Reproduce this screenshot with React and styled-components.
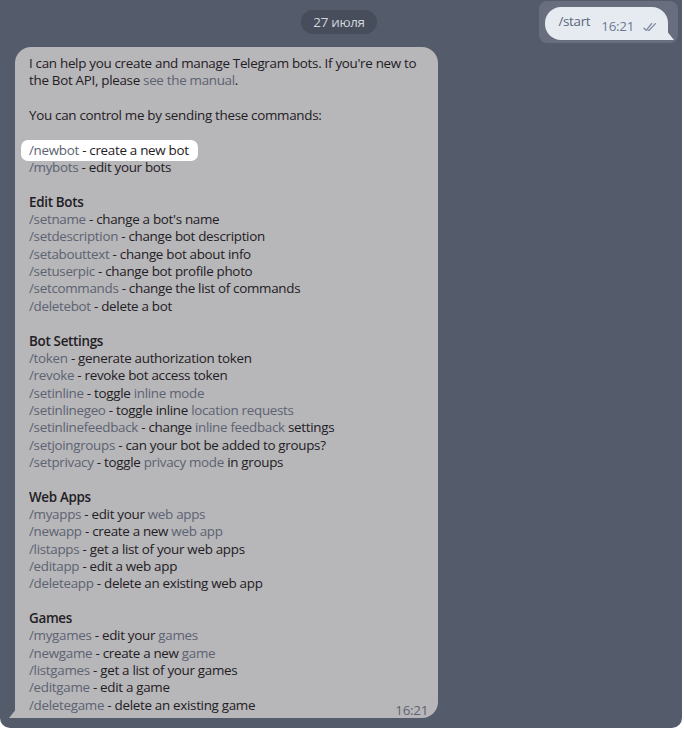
import React from "react";
import styled, { createGlobalStyle } from "styled-components";

const GlobalStyle = createGlobalStyle`
  html, body {
    margin: 0;
    padding: 0;
    background: #ffffff;
  }
  body {
    font-family: "Open Sans", "Noto Sans", sans-serif;
    letter-spacing: -0.3px;
  }
`;

const Chat = styled.div`
  width: 682px;
  height: 728px;
  background: #545b6b;
  border-radius: 0 0 10px 10px;
  box-sizing: border-box;
  padding: 1px 4px 0 0;
  overflow: hidden;
`;

const TopRow = styled.div`
  display: grid;
  grid-template-columns: 1fr auto 1fr;
  align-items: start;
  height: 46px;
`;

const DatePill = styled.div`
  grid-column: 2;
  margin-top: 9px;
  height: 24px;
  padding: 0 12px;
  border-radius: 12px;
  background: #474d5b;
  color: #d3d6dd;
  font-size: 13.4px;
  line-height: 24px;
`;

const Selection = styled.div`
  grid-column: 3;
  justify-self: end;
  background: #686e7d;
  border-radius: 8px;
  padding: 6px 10px 3px 6px;
`;

const OutBubble = styled.div`
  position: relative;
  display: flex;
  align-items: flex-end;
  gap: 11px;
  height: 33px;
  box-sizing: border-box;
  padding: 0 11px 6px 13px;
  background: #e6ebf2;
  border-radius: 16px 16px 0 16px;
  &::after {
    content: "";
    position: absolute;
    right: -6px;
    bottom: 0;
    width: 8px;
    height: 10px;
    background: #e6ebf2;
    clip-path: polygon(0 0, 0 100%, 100% 100%);
  }
`;

const OutText = styled.span`
  color: #5b6679;
  font-size: 13.4px;
  line-height: 19px;
  margin-bottom: 3px;
`;

const Time = styled.span`
  color: ${(p) => p.$color || "#6c7a90"};
  font-size: 13.4px;
  line-height: 15px;
  display: inline-flex;
  align-items: center;
  gap: 9px;
  margin-bottom: ${(p) => p.$drop || 0}px;
`;

const InBubble = styled.div`
  position: relative;
  width: 423px;
  margin-left: 15px;
  box-sizing: border-box;
  padding: 8px 10px 4px 14px;
  background: #b7b6b9;
  border-radius: 16px 16px 16px 0;
  color: #1f2024;
  font-size: 13.4px;
  line-height: 17.35px;
  &::before {
    content: "";
    position: absolute;
    left: -6px;
    bottom: 0;
    width: 8px;
    height: 10px;
    background: #b7b6b9;
    clip-path: polygon(100% 0, 100% 100%, 0 100%);
  }
`;

const Line = styled.div`
  white-space: nowrap;
  height: 17.35px;
`;

const Heading = styled(Line)`
  font-weight: 600;
`;

const Link = styled.span`
  color: #5c6372;
`;

const Marked = styled.span`
  display: inline-block;
  background: #ffffff;
  border-radius: 7px;
  margin: -2px -9px -2px -8px;
  padding: 2px 9px 2px 8px;
  line-height: 17.35px;
  vertical-align: top;
`;

const LastRow = styled.div`
  display: flex;
  justify-content: space-between;
  align-items: flex-end;
`;

const Checks = () => (
  <svg width="14" height="10" viewBox="0 0 14 10" fill="none" stroke="#7a879c" strokeWidth="1.3" strokeLinecap="round" strokeLinejoin="round">
    <path d="M1 6.2 L3.2 8.4 L8.6 1.6" />
    <path d="M5.2 8.4 L6 8.4 L12.4 1.6" />
  </svg>
);

const Cmd = ({ c, children }) => (
  <Line>
    <Link>{c}</Link> - {children}
  </Line>
);

export default function App() {
  return (
    <>
      <GlobalStyle />
      <Chat>
        <TopRow>
          <DatePill>27 июля</DatePill>
          <Selection>
            <OutBubble>
              <OutText>/start</OutText>
              <Time>
                16:21
                <Checks />
              </Time>
            </OutBubble>
          </Selection>
        </TopRow>
        <InBubble>
          <Line>I can help you create and manage Telegram bots. If you're new to</Line>
          <Line>
            the Bot API, please <Link>see the manual</Link>.
          </Line>
          <Line />
          <Line>You can control me by sending these commands:</Line>
          <Line />
          <Line>
            <Marked>
              <Link>/newbot</Link> - create a new bot
            </Marked>
          </Line>
          <Cmd c="/mybots">edit your bots</Cmd>
          <Line />
          <Heading>Edit Bots</Heading>
          <Cmd c="/setname">change a bot's name</Cmd>
          <Cmd c="/setdescription">change bot description</Cmd>
          <Cmd c="/setabouttext">change bot about info</Cmd>
          <Cmd c="/setuserpic">change bot profile photo</Cmd>
          <Cmd c="/setcommands">change the list of commands</Cmd>
          <Cmd c="/deletebot">delete a bot</Cmd>
          <Line />
          <Heading>Bot Settings</Heading>
          <Cmd c="/token">generate authorization token</Cmd>
          <Cmd c="/revoke">revoke bot access token</Cmd>
          <Cmd c="/setinline">
            toggle <Link>inline mode</Link>
          </Cmd>
          <Cmd c="/setinlinegeo">
            toggle inline <Link>location requests</Link>
          </Cmd>
          <Cmd c="/setinlinefeedback">
            change <Link>inline feedback</Link> settings
          </Cmd>
          <Cmd c="/setjoingroups">can your bot be added to groups?</Cmd>
          <Cmd c="/setprivacy">
            toggle <Link>privacy mode</Link> in groups
          </Cmd>
          <Line />
          <Heading>Web Apps</Heading>
          <Cmd c="/myapps">
            edit your <Link>web apps</Link>
          </Cmd>
          <Cmd c="/newapp">
            create a new <Link>web app</Link>
          </Cmd>
          <Cmd c="/listapps">get a list of your web apps</Cmd>
          <Cmd c="/editapp">edit a web app</Cmd>
          <Cmd c="/deleteapp">delete an existing web app</Cmd>
          <Line />
          <Heading>Games</Heading>
          <Cmd c="/mygames">
            edit your <Link>games</Link>
          </Cmd>
          <Cmd c="/newgame">
            create a new <Link>game</Link>
          </Cmd>
          <Cmd c="/listgames">get a list of your games</Cmd>
          <Cmd c="/editgame">edit a game</Cmd>
          <LastRow>
            <Cmd c="/deletegame">delete an existing game</Cmd>
            <Time $color="#5f6370" $drop={-4}>16:21</Time>
          </LastRow>
        </InBubble>
      </Chat>
    </>
  );
}
